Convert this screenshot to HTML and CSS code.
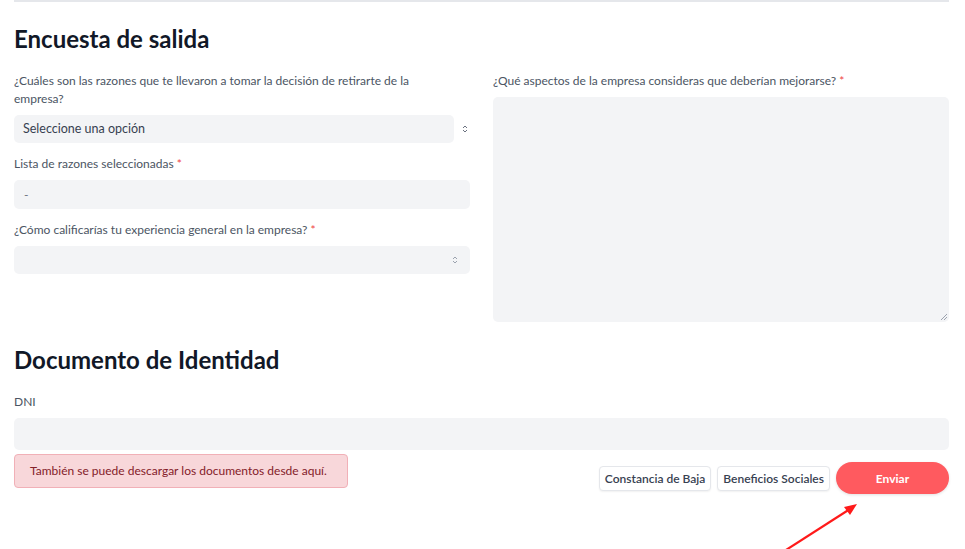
FILE: index.html
```html
<!DOCTYPE html>
<html lang="es">
<head>
  <meta charset="UTF-8">
  <meta name="viewport" content="width=device-width, initial-scale=1.0">
  <title>Encuesta de salida</title>
  <link rel="stylesheet" href="styles.css">
</head>
<body>

<div id="page">
  <div class="section">
    <h2 class="title">Encuesta de salida</h2>
    <div class="grid">
      <div class="col">
        <div class="field">
          <label class="label label-wrap">¿Cuáles son las razones que te llevaron a tomar la decisión de retirarte de la empresa?</label>
          <div class="select select-short">
            <div class="select-box">Seleccione una opción</div>
            <svg class="chev" width="6" height="10" viewBox="0 0 6 10"><path d="M1 4 L3 2 L5 4 M1 6 L3 8 L5 6" fill="none" stroke="#6b7280" stroke-width="1"/></svg>
          </div>
        </div>
        <div class="field">
          <label class="label">Lista de razones seleccionadas <span class="req">*</span></label>
          <div class="input input-mid">-</div>
        </div>
        <div class="field">
          <label class="label">¿Cómo calificarías tu experiencia general en la empresa? <span class="req">*</span></label>
          <div class="select select-full">
            <div class="select-box"></div>
            <svg class="chev" width="6" height="10" viewBox="0 0 6 10"><path d="M1 4 L3 2 L5 4 M1 6 L3 8 L5 6" fill="none" stroke="#9ca3af" stroke-width="1"/></svg>
          </div>
        </div>
      </div>
      <div class="col">
        <div class="field">
          <label class="label">¿Qué aspectos de la empresa consideras que deberían mejorarse? <span class="req">*</span></label>
          <div class="textarea">
            <svg class="grip" width="8" height="8" viewBox="0 0 8 8"><path d="M1 7 L7 1 M4 7 L7 4" stroke="#9ca3af" stroke-width="1"/></svg>
          </div>
        </div>
      </div>
    </div>
  </div>

  <div class="section section-doc">
    <h2 class="title">Documento de Identidad</h2>
    <div class="field">
      <label class="label">DNI</label>
      <div class="input input-big"></div>
    </div>
    <div class="actions">
      <div class="alert">También se puede descargar los documentos desde aquí.</div>
      <div class="buttons">
        <button class="btn">Constancia de Baja</button>
        <button class="btn">Beneficios Sociales</button>
        <button class="btn-send">Enviar</button>
      </div>
    </div>
  </div>

  <!-- flecha de anotación -->
  <svg class="pointer" width="90" height="60" viewBox="0 0 90 60">
    <path d="M6 58 L70 17" stroke="#ff1a1a" stroke-width="2.2" fill="none"/>
    <path d="M77 12 L64 15 L70 23 Z" fill="#ff1a1a"/>
  </svg>
</div>

</body>
</html>
```

FILE: styles.css
```css
body {
  margin: 0;
  font-family: "Lato", "Noto Sans", sans-serif;
  color: #1f2937;
  background: #fff;
}

#page {
  position: relative;
  width: 935px;
  margin-left: 14px;
  border-top: 2px solid #e5e7eb;
  height: 547px;
}

.title {
  margin: 0;
  font-size: 24px;
  line-height: 32px;
  font-weight: 700;
  color: #111827;
}

.section {
  padding-top: 21px;
}

.section-doc {
  padding-top: 10px;
}

.grid {
  display: grid;
  grid-template-columns: 456px 456px;
  column-gap: 23px;
  margin-top: 17px;
}

.field {
  margin-bottom: 12px;
}

.label {
  display: block;
  font-size: 12px;
  line-height: 18px;
  color: #4b5563;
  margin-bottom: 7px;
}

.label-wrap {
  max-width: 420px;
}

.req {
  color: #ef4444;
}

.select {
  display: flex;
  align-items: center;
}

.select-box {
  background: #f3f4f6;
  border-radius: 5px;
  height: 28px;
  line-height: 28px;
  padding-left: 9px;
  font-size: 12.5px;
  color: #374151;
  flex: 1;
}

.select-short .select-box {
  margin-right: 8px;
}

.select-short .chev {
  margin-right: 2px;
}

.select-full {
  position: relative;
}

.select-full .chev {
  position: absolute;
  right: 12px;
  top: 9px;
}

.input {
  background: #f3f4f6;
  border-radius: 5px;
  padding-left: 10px;
  font-size: 12px;
  color: #6b7280;
}

.input-mid {
  height: 29px;
  line-height: 29px;
}

.input-big {
  height: 32px;
}

.textarea {
  position: relative;
  background: #f3f4f6;
  border-radius: 5px;
  height: 225px;
}

.grip {
  position: absolute;
  right: 1px;
  bottom: 1px;
}

.section-doc .title {
  margin-bottom: 17px;
}

.section-doc .field {
  margin-bottom: 4px;
}

.actions {
  display: flex;
  justify-content: space-between;
  align-items: flex-start;
}

.alert {
  background: #f8d7da;
  border: 1px solid #f1b0b7;
  border-radius: 4px;
  color: #842029;
  font-size: 12px;
  width: 300px;
  height: 32px;
  line-height: 32px;
  padding-left: 15px;
  padding-right: 17px;
}

.buttons {
  display: flex;
  align-items: center;
  gap: 6px;
  margin-top: 8px;
}

.btn {
  font-family: inherit;
  font-size: 12px;
  font-weight: 600;
  color: #374151;
  background: #fff;
  border: 1px solid #e5e7eb;
  border-radius: 4px;
  height: 25px;
  padding: 0 5px;
  box-shadow: 0 1px 2px rgba(0, 0, 0, 0.06);
}

.btn-send {
  font-family: inherit;
  font-size: 12px;
  font-weight: 700;
  color: #fff;
  background: #ff5a5f;
  border: none;
  border-radius: 16px;
  width: 113px;
  height: 32px;
  box-shadow: 0 1px 3px rgba(0, 0, 0, 0.12);
}

.pointer {
  position: absolute;
  left: 766px;
  top: 490px;
}
```
